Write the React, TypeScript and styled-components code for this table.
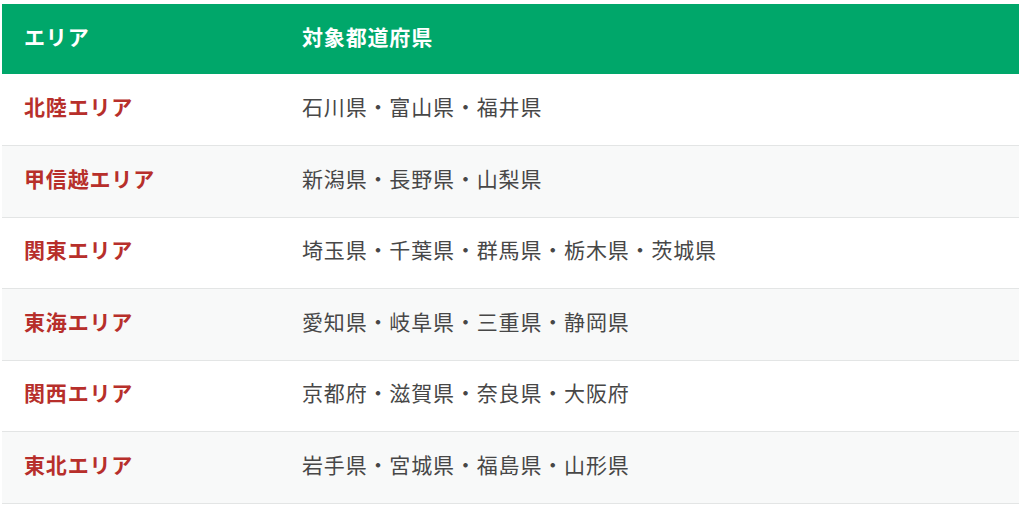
import { createGlobalStyle, styled } from "styled-components";

const GlobalStyle = createGlobalStyle`
  html, body {
    margin: 0;
    padding: 0;
    background: #ffffff;
  }
  body {
    font-family: "Noto Sans CJK JP", "Noto Sans", sans-serif;
  }
`;

const Wrapper = styled.div`
  padding: 4px 5px 0 2px;
`;

const Table = styled.table`
  width: 100%;
  border-collapse: collapse;
  font-size: 21px;
  letter-spacing: 0.04em;
`;

const HeadRow = styled.tr`
  background: #00a76a;
  height: 70px;
`;

const HeadCell = styled.th<{ $w?: string }>`
  box-sizing: border-box;
  text-align: left;
  color: #ffffff;
  font-weight: 700;
  padding: 0 0 6px 22px;
  width: ${(p) => p.$w || "auto"};
`;

const Row = styled.tr<{ $striped: boolean }>`
  background: ${(p) => (p.$striped ? "#f8f9f9" : "#ffffff")};
  height: 71.5px;
  border-bottom: 1px solid #e3e5e5;
`;

const AreaCell = styled.td`
  color: #b72f2b;
  font-weight: 700;
  padding: 0 0 7px 22px;
`;

const PrefCell = styled.td`
  color: #474747;
  padding: 0 0 7px 22px;
`;

const rows = [
  ["北陸エリア", "石川県・富山県・福井県"],
  ["甲信越エリア", "新潟県・長野県・山梨県"],
  ["関東エリア", "埼玉県・千葉県・群馬県・栃木県・茨城県"],
  ["東海エリア", "愛知県・岐阜県・三重県・静岡県"],
  ["関西エリア", "京都府・滋賀県・奈良県・大阪府"],
  ["東北エリア", "岩手県・宮城県・福島県・山形県"],
];

function App() {
  return (
    <Wrapper>
      <GlobalStyle />
      <Table>
        <thead>
          <HeadRow>
            <HeadCell $w="278px">エリア</HeadCell>
            <HeadCell>対象都道府県</HeadCell>
          </HeadRow>
        </thead>
        <tbody>
          {rows.map(([area, prefs], i) => (
            <Row key={area} $striped={i % 2 === 1}>
              <AreaCell>{area}</AreaCell>
              <PrefCell>{prefs}</PrefCell>
            </Row>
          ))}
        </tbody>
      </Table>
    </Wrapper>
  );
}

export default App;
